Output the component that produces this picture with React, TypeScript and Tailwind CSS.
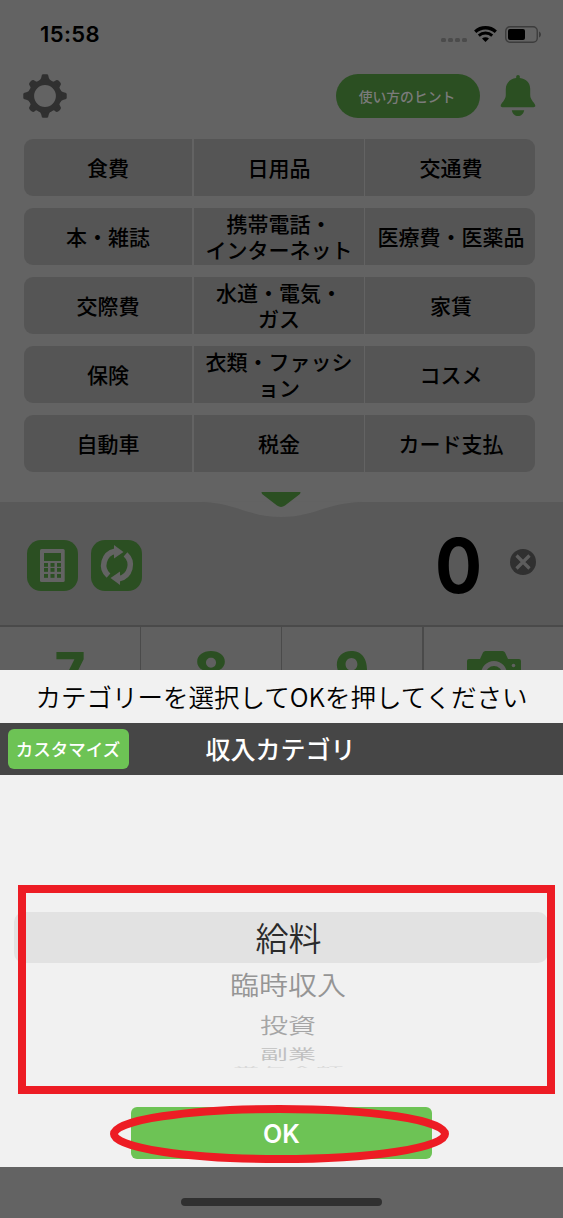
import React from 'react';

const CATEGORY_ROWS: string[][] = [
  ['食費', '日用品', '交通費'],
  ['本・雑誌', '携帯電話・\nインターネット', '医療費・医薬品'],
  ['交際費', '水道・電気・\nガス', '家賃'],
  ['保険', '衣類・ファッシ\nョン', 'コスメ'],
  ['自動車', '税金', 'カード支払'],
];

const StatusBar: React.FC = () => (
  <div className="flex h-[68px] items-start justify-between pl-10 pr-[22px] pt-[22px]">
    <span className="font-['Inter'] text-[22px] font-semibold leading-[25px] tracking-[0.4px] text-black">15:58</span>
    <div className="flex h-[26px] items-center">
      <div className="mr-[7px] mt-[9px] flex gap-[2px]">
        <span className="h-[4px] w-[5px] rounded-[1.5px] bg-[#4b4b4b]" />
        <span className="h-[4px] w-[5px] rounded-[1.5px] bg-[#4b4b4b]" />
        <span className="h-[4px] w-[5px] rounded-[1.5px] bg-[#4b4b4b]" />
        <span className="h-[4px] w-[5px] rounded-[1.5px] bg-[#4b4b4b]" />
      </div>
      <svg className="-mt-[2px] mr-2" width="23" height="16" viewBox="0 0 23 16" fill="none">
        <path d="M1.2 5.700C7 .4 16 .4 21.800 5.700" stroke="#000" strokeWidth="3.300" />
        <path d="M4.800 9.600c3.800-3.500 9.600-3.500 13.400 0" stroke="#000" strokeWidth="2.800" />
        <path d="M8 12.600c2.200-1.900 4.800-1.900 7 0L11.500 16z" fill="#000" />
      </svg>
      <svg width="36" height="18" viewBox="0 0 36 18">
        <rect x=".75" y=".75" width="31.5" height="15.5" rx="4.2" fill="none" stroke="#3c3c3c" strokeWidth="1.4" />
        <rect x="3" y="3" width="17" height="11" rx="2" fill="#000" />
        <path d="M34 5.5c2.600 1 2.600 5 0 6z" fill="#3c3c3c" />
      </svg>
    </div>
  </div>
);

const GearIcon: React.FC = () => (
  <svg width="44" height="44" viewBox="0 0 44 44">
    <g fill="#303030">
      {[0, 90, 180, 270].map((angle) => (
        <path key={angle} transform={`rotate(${angle} 22 22)`} d="M14.500 7.500q3.500-1.500 4-5Q18.600.3 20 .3h4q1.400 0 1.500 2.200.5 3.500 4 5z" />
      ))}
      {[45, 135, 225, 315].map((angle) => (
        <path key={angle} transform={`rotate(${angle} 22 22)`} d="M15.500 8q3-1.500 3-4Q18.500 1.500 22 1.500t3.500 2.500q0 2.500 3 4z" />
      ))}
    </g>
    <circle cx="22" cy="22" r="13.700" fill="none" stroke="#303030" strokeWidth="5.600" />
  </svg>
);

const BellIcon: React.FC = () => (
  <svg width="36" height="43" viewBox="0 0 36 43" fill="#2b4f22">
    <path d="M16.200 2.500Q16.200 1 18 1t1.800 1.500v1.600c6.500.9 10.400 5 10.400 10.900v6c0 5.500 5.100 8 5.100 10.800 0 1-.8 1.400-1.800 1.400H2.500c-1 0-1.800-.4-1.800-1.400C.7 29 5.800 26.500 5.800 21v-6c0-5.900 3.900-10 10.400-10.900z" />
    <path d="M11.800 36.200h12.400c-.7 3.800-3.200 5.800-6.200 5.800s-5.500-2-6.200-5.800z" />
  </svg>
);

const CalculatorIcon: React.FC = () => (
  <svg width="51" height="51" viewBox="0 0 51 51">
    <rect x="13" y="9" width="24.700" height="33" rx="1.500" fill="#636363" />
    <g fill="#2b4f22">
      <rect x="17" y="13" width="17" height="8" />
      {[23, 28, 34].map((y) =>
        [17, 23.5, 30].map((x) => <rect key={`${x}-${y}`} x={x} y={y} width="4" height="3.800" />)
      )}
    </g>
  </svg>
);

const RefreshIcon: React.FC = () => (
  <svg width="51" height="51" viewBox="0 0 51 51">
    {[0, 180].map((angle) => (
      <g key={angle} transform={`rotate(${angle} 26 25)`}>
        <path d="M17.500 35.700A14.200 14.200 0 0 1 24 11.200" fill="none" stroke="#636363" strokeWidth="5.600" />
        <path d="M23 5l9.500 7L23 18.500z" fill="#636363" />
      </g>
    ))}
  </svg>
);

const CameraIcon: React.FC = () => (
  <svg width="54" height="44" viewBox="0 0 54 44">
    <path d="M2 8h11l3-6.500Q16.700 0 18.500 0h17q1.800 0 2.500 1.500L41 8h11q2 0 2 2v32q0 2-2 2H2q-2 0-2-2V10q0-2 2-2z" fill="#2b4f22" />
    <circle cx="27" cy="23" r="10.500" fill="none" stroke="#606060" strokeWidth="5" />
    <circle cx="46.500" cy="14.500" r="1.800" fill="#606060" />
  </svg>
);

const Home: React.FC = () => (
  <div className="flex h-[670px] flex-col overflow-hidden">
    <StatusBar />
    <header className="flex h-[71px] items-start pl-[23px] pr-[27px] pt-[6px]">
      <GearIcon />
      <button className="ml-auto mr-5 h-11 w-36 rounded-full bg-[#2b4f22] pb-px pr-[2px] text-[13.800px] text-[#7b7b7b]">使い方のヒント</button>
      <BellIcon />
    </header>

    <div className="flex flex-col gap-3 pl-6 pr-7">
      {CATEGORY_ROWS.map((row) => (
        <div key={row[0]} className="flex h-[57px] overflow-hidden rounded-[9px]">
          <div className="mr-[2px] flex w-[168px] items-center justify-center bg-[#555555] pb-px">{row[0]}</div>
          <div className="mr-px flex w-[170px] items-center justify-center whitespace-pre bg-[#555555] pb-px text-center">{row[1]}</div>
          <div className="flex flex-1 items-center justify-center bg-[#555555] pb-px pl-[2px]">{row[2]}</div>
        </div>
      ))}
    </div>

    <div className="mt-[30px] flex h-[123px] shrink-0 flex-col bg-[#595959]">
      <div className="flex h-[16px] justify-center">
        <svg className="-mt-[11px] h-[27px] w-[160px]" viewBox="0 0 160 27">
          <path d="M0 10.500V11c34 1 46 15 79 15s45-14 81-15v-.500z" fill="#636363" />
          <path d="M59.500 1h39q0 1.800-1.200 2.600L83 14.500q-4 2.800-8 0L60.700 3.600Q59.500 2.800 59.500 1z" fill="#2b4f22" />
        </svg>
      </div>
      <div className="flex h-[95px] items-center pl-[27px] pr-[27px]">
        <button className="mr-[13px] size-[51px] rounded-[14px] bg-[#2b4f22]"><CalculatorIcon /></button>
        <button className="size-[51px] rounded-[14px] bg-[#2b4f22]"><RefreshIcon /></button>
        <span className="-mt-[2px] ml-auto mr-[26px] scale-x-[0.92] font-['Inter'] text-[76px] font-bold leading-[80px] text-black">0</span>
        <svg className="-mt-[7px]" width="26" height="26" viewBox="0 0 26 26">
          <circle cx="13" cy="13" r="13" fill="#303030" />
          <path d="M6.500 6.500l13 13M19.500 6.500l-13 13" stroke="#5d5d5d" strokeWidth="3.200" />
        </svg>
      </div>
    </div>

    <div className="grid h-[45px] shrink-0 grid-cols-[141px_141px_142px_139px] border-t-2 border-[#4a4a4a] bg-[#606060] font-['Inter'] text-[52px] font-extrabold leading-[60px] text-[#2b4f22]">
      <div className="border-r border-[#4a4a4a] pt-[15px] text-center">7</div>
      <div className="border-r border-[#4a4a4a] pt-[15px] text-center">8</div>
      <div className="border-r-2 border-[#4a4a4a] pt-[15px] text-center">9</div>
      <div className="flex justify-center pt-6"><CameraIcon /></div>
    </div>
  </div>
);

// Wheel picker: rows get flatter and fainter away from the selected one
const CategoryPicker: React.FC = () => (
  <div className="flex h-[332px] flex-col pt-[110px] font-[350]">
    <div className="mx-[5px] flex h-[209px] flex-col items-center pl-[21px] pr-2 pt-[27px]">
      <div className="ml-[-12px] flex h-[51px] w-[534px] shrink-0 items-center justify-center self-start rounded-[10px] bg-[#e2e2e2] pl-[15px] text-[33px] text-[#2b2b2b]">給料</div>
      <div className="flex h-[42px] items-center text-[29px] text-[#959595]"><span className="scale-y-90">臨時収入</span></div>
      <div className="flex h-[37px] items-center text-[28px] text-[#a5a5a5]"><span className="scale-y-75">投資</span></div>
      <div className="flex h-[21px] items-center text-[28px] text-[#c0c0c0]"><span className="scale-y-50">副業</span></div>
      <div className="flex h-[5px] items-start overflow-hidden text-[28px] leading-[28px] text-[#d9d9d9]"><span className="mt-[3px] origin-top scale-y-[0.35]">賞与金額</span></div>
    </div>
  </div>
);

const CategorySheet: React.FC = () => (
  <div className="flex h-[497px] flex-col bg-[#f1f1f1]">
    <p className="flex h-[53px] items-center justify-center whitespace-nowrap pb-px text-[25.500px] font-[350] text-black">カテゴリーを選択してOKを押してください</p>
    <div className="grid h-[52px] grid-cols-[121px_1fr_121px] items-center bg-[#464646] px-2 text-white">
      <button className="h-10 rounded-[6px] bg-[#6dc355] pr-px text-[17.500px] font-medium">カスタマイズ</button>
      <h2 className="pb-px pr-[2px] text-center text-[25px] font-medium">収入カテゴリ</h2>
    </div>
    <CategoryPicker />
    <div className="flex justify-center">
      <button className="h-[52px] w-[301px] rounded-[6px] bg-[#6dc355] pt-[3px] font-['Inter'] text-[25px] font-semibold text-white">OK</button>
    </div>
  </div>
);

const App: React.FC = () => (
  <main className="relative flex h-[1218px] w-[563px] flex-col overflow-hidden bg-[#636363] font-['Noto_Sans_CJK_JP',sans-serif]">
    <div className="text-[21px] font-medium leading-[26px] text-black"><Home /></div>
    <CategorySheet />
    <div className="flex h-[51px] justify-center pt-[31px]">
      <div className="h-2 w-[201px] rounded-full bg-[#303030]" />
    </div>

    {/* Marks drawn over the screen */}
    <div className="absolute left-[18px] top-[885px] h-[209px] w-[537px] border-8 border-[#ed1c24]" />
    <svg className="absolute left-[110px] top-[1105px]" width="339" height="58" viewBox="0 0 339 58">
      <ellipse cx="169.500" cy="29" rx="165.500" ry="25" fill="none" stroke="#ed1c24" strokeWidth="8" />
    </svg>
  </main>
);

export default App;
